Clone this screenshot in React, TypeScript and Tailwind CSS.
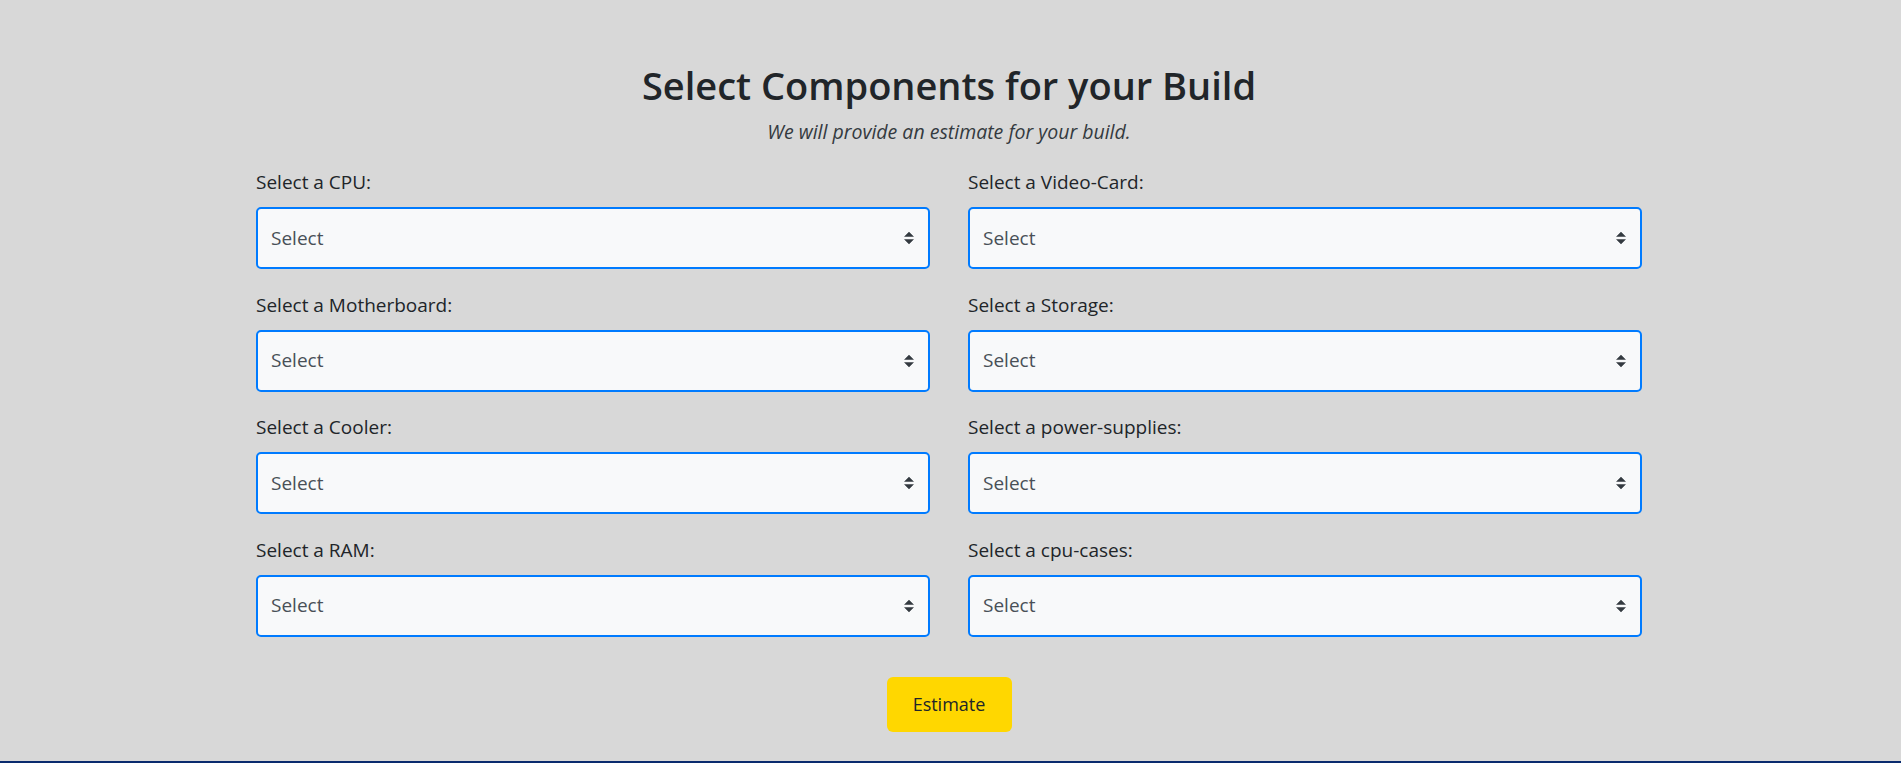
import React from 'react';

const LEFT = ['CPU', 'Motherboard', 'Cooler', 'RAM'];
const RIGHT = ['Video-Card', 'Storage', 'power-supplies', 'cpu-cases'];

function Arrows() {
  return (
    <svg width="10" height="13" viewBox="0 0 4 5" className="pointer-events-none absolute right-[16px] top-1/2 -translate-y-1/2">
      <path fill="#343a40" d="M2 0L0 2h4zm0 5L0 3h4z" />
    </svg>
  );
}

function Field({ name }: { name: string }) {
  return (
    <div className="flex flex-col">
      <label className="text-[19px] leading-[28px] text-[#212529]">Select a {name}:</label>
      <div className="relative mt-[11px]">
        <select className="h-[62px] w-full appearance-none rounded-[5px] border-2 border-[#007bff] bg-[#f8f9fa] pl-[13px] text-[19px] text-[#495057] outline-none">
          <option>Select</option>
        </select>
        <Arrows />
      </div>
    </div>
  );
}

export default function App() {
  const rows = LEFT.map((l, i) => [l, RIGHT[i]]);
  return (
    <div className="flex min-h-[763px] flex-col bg-[#d8d8d8] font-['Open_Sans',sans-serif]">
      <main className="ml-[256px] flex w-[1386px] flex-1 flex-col items-center pt-[62px]">
        <h1 className="text-[38px] font-semibold leading-[46px] text-[#212529]">Select Components for your Build</h1>
        <p className="mt-[10px] text-[19.5px] italic leading-[28px] text-[#343a40]">We will provide an estimate for your build.</p>
        <div className="mt-[22px] grid w-full grid-cols-2 gap-x-[38px] gap-y-[21.5px]">
          {rows.map(([a, b]) => (
            <React.Fragment key={a}>
              <Field name={a} />
              <Field name={b} />
            </React.Fragment>
          ))}
        </div>
        <button className="mt-[40px] h-[55px] w-[125px] rounded-[6px] bg-[#ffd700] text-[18px] text-[#212529]">Estimate</button>
      </main>
      <div className="h-[2px] bg-[#0a2b6e]" />
    </div>
  );
}
